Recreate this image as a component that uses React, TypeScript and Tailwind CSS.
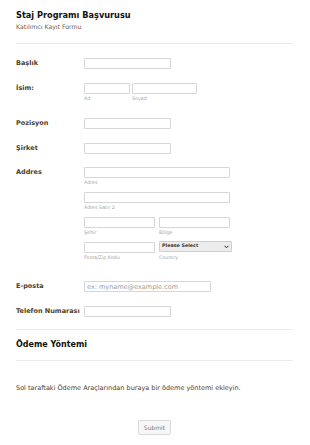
const font = { fontFamily: '"DejaVu Sans", Verdana, sans-serif' };

function Label({ children }: { children: React.ReactNode }) {
  return (
    <div className="w-[68px] shrink-0 text-[6.5px] leading-[11px] font-bold text-[#4f4128] whitespace-nowrap">
      {children}
    </div>
  );
}

function Input({ className = '', placeholder }: { className?: string; placeholder?: string }) {
  return (
    <input
      className={`block h-[11px] border border-[#d6d6d6] rounded-[1px] bg-white px-[2px] text-[6.5px] leading-[9px] text-[#333] placeholder:text-[#9a9a9a] outline-none ${className}`}
      placeholder={placeholder}
    />
  );
}

function Sub({ children }: { children: React.ReactNode }) {
  return <div className="h-[9px] pt-[2px] text-[4.8px] leading-[6px] text-[#a3a3a3]">{children}</div>;
}

export default function App() {
  return (
    <div className="w-[310px] min-h-[445px] bg-white pl-4 pr-[17px] leading-none" style={font}>
      <div className="pt-[10px] pb-[12px] border-b border-[#ebebeb]">
        <h1 className="text-[8.2px] leading-[10px] font-bold text-[#111]">Staj Programı Başvurusu</h1>
        <p className="mt-[3px] text-[6.2px] leading-[8px] text-[#675d51]">Katılımcı Kayıt Formu</p>
      </div>

      <div className="pt-[7px]">
        <div className="flex py-[7px]">
          <Label>Başlık</Label>
          <Input className="w-[87px]" />
        </div>

        <div className="flex pt-[7px] pb-[8px]">
          <Label>İsim:</Label>
          <div className="flex gap-[2px]">
            <div>
              <Input className="w-[46px]" />
              <Sub>Ad</Sub>
            </div>
            <div>
              <Input className="w-[65px]" />
              <Sub>Soyad</Sub>
            </div>
          </div>
        </div>

        <div className="flex py-[7px]">
          <Label>Pozisyon</Label>
          <Input className="w-[87px]" />
        </div>

        <div className="flex pt-[7px] pb-[6px]">
          <Label>Şirket</Label>
          <Input className="w-[87px]" />
        </div>

        <div className="flex pt-[7px] pb-[12px]">
          <Label>Addres</Label>
          <div className="flex flex-col gap-[5px]">
            <div>
              <Input className="w-[146px]" />
              <Sub>Adres</Sub>
            </div>
            <div>
              <Input className="w-[146px]" />
              <Sub>Adres Satır 2</Sub>
            </div>
            <div className="flex gap-[4px]">
              <div>
                <Input className="w-[71px]" />
                <Sub>Şehir</Sub>
              </div>
              <div>
                <Input className="w-[71px]" />
                <Sub>Bölge</Sub>
              </div>
            </div>
            <div className="flex gap-[4px]">
              <div>
                <Input className="w-[71px]" />
                <Sub>Posta/Zip Kodu</Sub>
              </div>
              <div>
                <div className="w-[73px] h-[11px] -mt-[1px] flex items-center justify-between border border-[#cfcfcf] bg-[#ececec] px-[2px] rounded-[1px]">
                  <span className="text-[4.8px] font-bold text-[#333]">Please Select</span>
                  <svg width="5" height="4" viewBox="0 0 10 8">
                    <path d="M1 1.5 L5 5.5 L9 1.5" fill="none" stroke="#222" strokeWidth="2" />
                  </svg>
                </div>
                <div className="mt-[1px]">
                  <Sub>Country</Sub>
                </div>
              </div>
            </div>
          </div>
        </div>

        <div className="flex py-[7px]">
          <Label>E-posta</Label>
          <Input className="w-[127px]" placeholder="ex: myname@example.com" />
        </div>

        <div className="flex pt-[7px] pb-[12px] border-b border-[#ebebeb]">
          <Label>Telefon Numarası</Label>
          <Input className="w-[87px]" />
        </div>
      </div>

      <div className="py-[8px] border-b border-[#ebebeb]">
        <h2 className="text-[8px] leading-[14px] font-bold text-[#111]">Ödeme Yöntemi</h2>
      </div>

      <p className="pt-[23px] text-[6.5px] leading-[8px] text-[#4f4130]">
        Sol taraftaki Ödeme Araçlarından buraya bir ödeme yöntemi ekleyin.
      </p>

      <div className="flex justify-center pt-[28px]">
        <button className="w-[33px] h-[15px] border border-[#d9d9d9] rounded-[2px] bg-[#f7f7f7] text-[6px] leading-none text-[#777]">
          Submit
        </button>
      </div>
    </div>
  );
}
